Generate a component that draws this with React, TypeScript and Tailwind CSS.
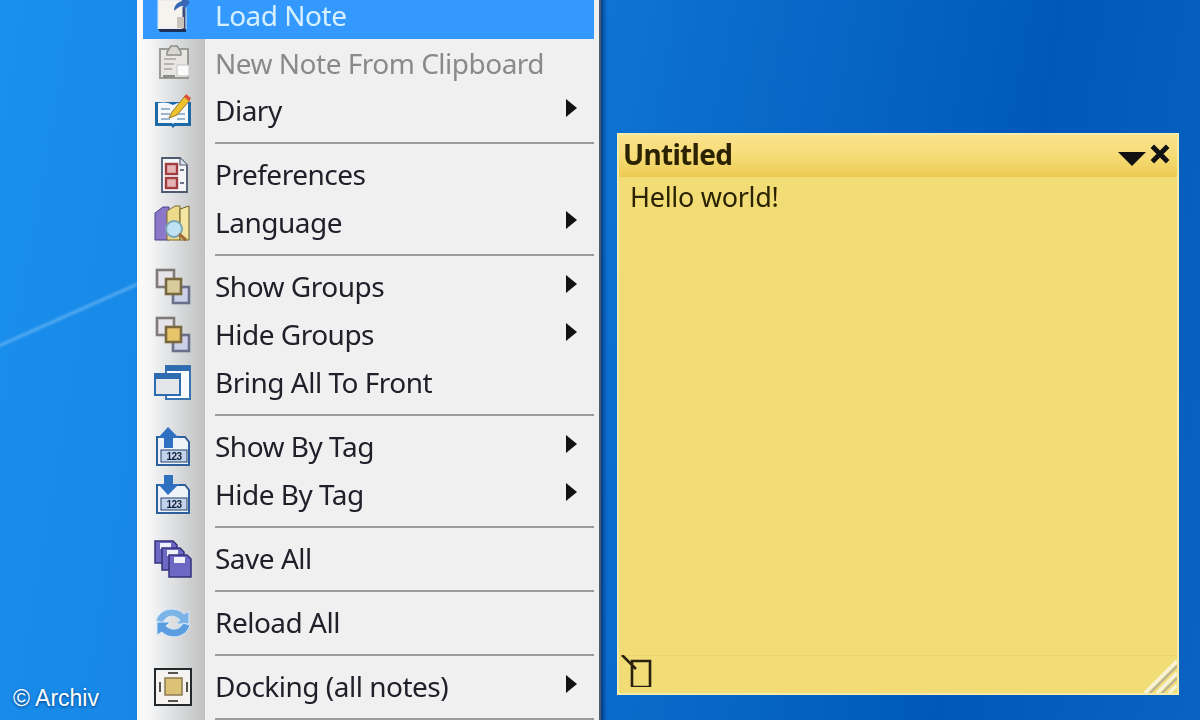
import type { ReactNode } from "react";

function Ico({ children }: { children: ReactNode }) {
  return (
    <svg viewBox="0 0 40 40" className="w-10 h-10 shrink-0 blur-[0.5px]">
      {children}
    </svg>
  );
}

const LoadIcon = () => (
  <Ico>
    <path d="M5 5h23l5 5v24H5z" fill="#f6f2ee" stroke="#dfe6f0" strokeWidth="1" />
    <path d="M5 34h28v3H7z" fill="#1f2f58" />
    <path d="M31 12v22" stroke="#3a4a78" strokeWidth="3" />
    <path d="M21 16c0-6 4-9 8-10l-1-5 9 6-6 8-1-4c-3 0-6 2-9 5z" fill="#3a66b8" />
    <path d="M24 22h7v11h-7z" fill="#c9c3bb" />
  </Ico>
);

const ClipIcon = () => (
  <Ico>
    <rect x="7" y="6" width="28" height="29" fill="#e8e6e2" stroke="#9a9a96" strokeWidth="2" />
    <path d="M14 9l4-6h6l4 6v3H14z" fill="#d8d6d0" stroke="#8e8e8a" strokeWidth="1.5" />
    <path d="M11 16h12M11 21h10M11 26h8" stroke="#a5a5a0" strokeWidth="1.5" />
    <rect x="24" y="22" width="12" height="11" fill="#fbfbfb" stroke="#c4c4c0" />
    <rect x="10" y="32" width="12" height="3" fill="#8d8d88" />
  </Ico>
);

const DiaryIcon = () => (
  <Ico>
    <path d="M2 11h36v24H22l-2 2-2-2H2z" fill="#1c6aa8" />
    <path d="M5 12c5-1 10-1 15 2 5-3 10-3 15-2v20H21l-1 1-1-1H5z" fill="#f6f8fb" />
    <path d="M8 18h9M8 23h9M8 28h9M24 23h8M24 28h8" stroke="#7d9ec0" strokeWidth="1.5" />
    <path d="M16 27l3-6L32 5l5 4-13 15z" fill="#efc330" stroke="#8e7a20" />
    <path d="M31 6l2-3 5 4-2 3z" fill="#e0503a" />
  </Ico>
);

const PrefIcon = () => (
  <Ico>
    <path d="M9 3h18l7 7v27H9z" fill="#f4f5f7" stroke="#4f5a70" strokeWidth="1.8" />
    <path d="M27 3v7h7" fill="#dfe3ea" stroke="#4f5a70" strokeWidth="1.2" />
    <rect x="13" y="9" width="11" height="10" fill="#e4b3b3" stroke="#a13c40" strokeWidth="2.4" />
    <rect x="13" y="23" width="11" height="10" fill="#e4b3b3" stroke="#a13c40" strokeWidth="2.4" />
    <path d="M27 15h4M27 28h4" stroke="#6a7488" strokeWidth="2" />
  </Ico>
);

const LangIcon = () => (
  <Ico>
    <path d="M2 10l8-6h6v33H2z" fill="#8b78c8" stroke="#4d4088" />
    <path d="M14 8l8-5h5v34H14z" fill="#ecd98a" stroke="#7c6a30" />
    <path d="M27 6l9-3v34h-9z" fill="#f3e6a0" stroke="#6b5a24" />
    <circle cx="21" cy="26" r="8" fill="#bfe3f2" stroke="#7aa4b8" strokeWidth="2" />
    <path d="M26 31l7 6" stroke="#a06a3c" strokeWidth="3" />
  </Ico>
);

const Squares = ({ mid }: { mid: string }) => (
  <Ico>
    <rect x="4" y="3" width="17" height="17" fill="#e6e4ea" stroke="#7f7a78" strokeWidth="2.6" />
    <rect x="20" y="20" width="16" height="16" fill="#ccd0e6" stroke="#68708c" strokeWidth="2.6" />
    <rect x="13" y="12" width="15" height="15" fill={mid} stroke="#7a6840" strokeWidth="2.6" />
  </Ico>
);

const FrontIcon = () => (
  <Ico>
    <rect x="13" y="3" width="24" height="33" fill="#fafcfe" stroke="#3a74b0" strokeWidth="2" />
    <rect x="13" y="3" width="24" height="5" fill="#2d6cb0" />
    <rect x="2" y="11" width="25" height="21" fill="#e4e6ea" stroke="#2d6cb0" strokeWidth="2" />
    <rect x="2" y="11" width="25" height="5" fill="#2d6cb0" />
  </Ico>
);

const TagIcon = ({ down }: { down?: boolean }) => (
  <Ico>
    <path d="M4 10h28l4 5v23H4z" fill="#eef3fa" stroke="#2e5f9c" strokeWidth="2" />
    <path d={down ? "M5 9h6V0h9v9h6L15 20z" : "M15 0l11 11h-6v10h-9V11H5z"} fill="#2f70c0" />
    <rect x="8" y="23" width="26" height="12" fill="#c4d4e8" stroke="#23406c" />
    <text x="21" y="33" textAnchor="middle" fontSize="10" fontWeight="700" fill="#10203c" fontFamily="Liberation Sans, sans-serif">
      123
    </text>
  </Ico>
);

const SaveIcon = () => (
  <Ico>
    {[0, 7, 14].map((o) => (
      <g key={o} transform={`translate(${o} ${o})`}>
        <path d="M2 2h18l4 4v18H2z" fill="#6d68c4" stroke="#34307c" strokeWidth="1.5" />
        <rect x="7" y="4" width="11" height="6" fill="#eef0fa" />
      </g>
    ))}
  </Ico>
);

const ReloadIcon = () => (
  <Ico>
    <path d="M3 18C6 6 22 2 31 11l5-3v13H23l4-4C21 11 13 12 10 20z" fill="#7db4e8" stroke="#d6eafa" />
    <path d="M37 22C34 34 18 38 9 29l-5 3V19h13l-4 4c6 5 14 4 17-3z" fill="#5a9de0" stroke="#d6eafa" />
  </Ico>
);

const DockIcon = () => (
  <Ico>
    <rect x="2" y="2" width="36" height="36" fill="#f4f3ef" stroke="#23282c" strokeWidth="2" />
    <rect x="12" y="11" width="17" height="17" fill="#dcc275" stroke="#8a7a50" strokeWidth="1.5" />
    <path d="M15 6h10M15 34h10M7 15v10M34 15v10" stroke="#55544c" strokeWidth="2" />
  </Ico>
);

const menu: Array<{ label?: string; icon?: ReactNode; sub?: boolean; active?: boolean; disabled?: boolean }> = [
  { label: "Load Note", icon: <LoadIcon />, active: true },
  { label: "New Note From Clipboard", icon: <ClipIcon />, disabled: true },
  { label: "Diary", icon: <DiaryIcon />, sub: true },
  {},
  { label: "Preferences", icon: <PrefIcon /> },
  { label: "Language", icon: <LangIcon />, sub: true },
  {},
  { label: "Show Groups", icon: <Squares mid="#d8cc9c" />, sub: true },
  { label: "Hide Groups", icon: <Squares mid="#e8c46a" />, sub: true },
  { label: "Bring All To Front", icon: <FrontIcon /> },
  {},
  { label: "Show By Tag", icon: <TagIcon />, sub: true },
  { label: "Hide By Tag", icon: <TagIcon down />, sub: true },
  {},
  { label: "Save All", icon: <SaveIcon /> },
  {},
  { label: "Reload All", icon: <ReloadIcon /> },
  {},
  { label: "Docking (all notes)", icon: <DockIcon />, sub: true },
  {},
];

export default function App() {
  return (
    <div
      className="relative flex h-[720px] w-[1200px] overflow-hidden bg-[linear-gradient(100deg,#1a8fee_0%,#1583e0_30%,#0a6ccc_55%,#0059ba_80%,#0a62c2_100%)]"
      style={{ fontFamily: '"Noto Sans", Tahoma, sans-serif' }}
    >
      {/* wallpaper streak */}
      <div className="absolute left-[-20px] top-[316px] h-[3px] w-[165px] -rotate-[24deg] bg-[#6db8f4]/70 blur-[1px]" />

      <div className="absolute bottom-[8px] left-[13px] text-[23px] leading-7 text-white [font-family:'Liberation_Sans',sans-serif] [text-shadow:0_1px_3px_#003a80]">
        © Archiv
      </div>

      {/* context menu */}
      <div className="relative ml-[137px] flex h-[780px] w-[464px] shrink-0 -translate-y-[9px] flex-col border-r-2 border-r-[#4a5a70] bg-[#f0f0f0] pr-[5px] shadow-[3px_0_4px_rgba(0,30,90,0.6)]">
        <div className="absolute inset-y-0 left-0 w-[68px] bg-[linear-gradient(90deg,#fbfbfb_0%,#f6f6f6_18%,#e6e8ea_40%,#c0c0c0_100%)]" />
        {menu.map((it, i) =>
          it.label ? (
            <div
              key={i}
              className={`relative ml-[6px] flex h-[48px] shrink-0 items-center pl-[10px] text-[28px] tracking-[-0.5px] blur-[0.4px] ${
                it.active
                  ? "bg-[#3399ff] text-[#d6f0ff]"
                  : it.disabled
                    ? "text-[#8a8a8a]"
                    : "text-[#20202a]"
              }`}
            >
              <span className="w-[62px] shrink-0">{it.icon}</span>
              <span className={`flex-1 whitespace-nowrap ${i > 1 ? "mb-[2px]" : ""}`}>{it.label}</span>
              {it.sub && (
                <span className="mb-[7px] mr-[17px] h-0 w-0 border-y-[9px] border-l-[11px] border-y-transparent border-l-[#111]" />
              )}
            </div>
          ) : (
            <div key={i} className="relative ml-[78px] flex h-[16px] shrink-0 items-center">
              <div className="h-[2px] w-full bg-[#9c9c9c]" />
            </div>
          ),
        )}
      </div>

      {/* sticky note */}
      <div className="relative ml-[16px] mt-[133px] flex h-[562px] w-[562px] shrink-0 flex-col border-2 border-[#f4ecaa] bg-[#f1dc76] text-[#2a2200] blur-[0.4px]">
        <div className="flex h-[42px] shrink-0 items-center justify-between bg-[linear-gradient(180deg,#fbe28c_0%,#f6db74_55%,#ecca52_100%)] pb-[4px] pl-[4px] pr-[6px]">
          <span className="text-[28px] font-bold tracking-[-0.7px]">Untitled</span>
          <div className="flex items-center gap-[3px]">
            <span className="mt-[9px] h-0 w-0 border-x-[14px] border-t-[14px] border-x-transparent border-t-[#111]" />
            <svg viewBox="0 0 20 20" className="h-[22px] w-[22px]">
              <path d="M3 3l14 14M17 3L3 17" stroke="#111" strokeWidth="4.5" />
            </svg>
          </div>
        </div>
        <div className="flex-1 px-[11px] pt-[2px] text-[27px] leading-[36px] tracking-[-0.3px]">Hello world!</div>
        <div className="relative h-[38px] shrink-0 border-t border-t-[#ecd66a]">
          <svg viewBox="0 0 32 32" className="absolute -top-[1px] left-[1px] h-[32px] w-[32px]">
            <path d="M12 6h18v26H12zM2 0l14 14" fill="none" stroke="#2a2010" strokeWidth="2.6" />
          </svg>
          <svg viewBox="0 0 34 34" className="absolute bottom-0 right-0 h-[34px] w-[34px]">
            <path d="M2 34L34 2M14 34L34 14M26 34l8-8" stroke="#f6f2d8" strokeWidth="3.5" />
            <path d="M7 34L34 7M19 34l15-15" stroke="#b8b29a" strokeWidth="2" />
          </svg>
        </div>
      </div>
    </div>
  );
}
